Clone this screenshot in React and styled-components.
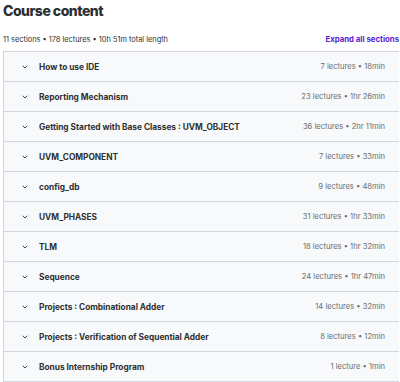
import styled, { createGlobalStyle } from 'styled-components';

const GlobalStyle = createGlobalStyle`
  html, body {
    margin: 0;
    padding: 0;
    background: #ffffff;
    overflow: hidden;
  }
  body {
    font-family: 'Inter', 'Noto Sans', sans-serif;
    color: #2d2f31;
  }
`;

const Page = styled.div`
  width: 396px;
  padding: 0 0 0 3px;
`;

const Title = styled.h2`
  margin: 0;
  padding-top: 1px;
  font-size: 14px;
  font-weight: 800;
  line-height: 20px;
  letter-spacing: -0.5px;
  color: #2d2f31;
`;

const Summary = styled.div`
  display: flex;
  justify-content: space-between;
  align-items: center;
  height: 16px;
  margin-top: 10px;
  margin-bottom: 4px;
  font-size: 7.4px;
  color: #2d2f31;
`;

const ExpandAll = styled.button`
  border: 0;
  background: none;
  padding: 0;
  font-family: inherit;
  font-size: 7.8px;
  font-weight: 700;
  color: #5624d0;
  cursor: pointer;
`;

const Sections = styled.div`
  border: 1px solid #d1d7dc;
  border-right: none;
`;

const SectionRow = styled.div`
  display: flex;
  align-items: center;
  height: 29px;
  padding: 0 14px 0 17px;
  background: #f7f9fa;

  &:not(:last-child) {
    border-bottom: 1px solid #d1d7dc;
  }
`;

const Chevron = styled.svg`
  width: 8px;
  height: 8px;
  flex-shrink: 0;
  margin-right: 10px;
`;

const SectionTitle = styled.div`
  flex: 1;
  font-size: 8.3px;
  font-weight: 700;
  color: #2d2f31;
`;

const SectionMeta = styled.div`
  font-size: 7.6px;
  color: #6a6f73;
`;

const sections = [
  ['How to use IDE', '7 lectures • 18min'],
  ['Reporting Mechanism', '23 lectures • 1hr 26min'],
  ['Getting Started with Base Classes : UVM_OBJECT', '36 lectures • 2hr 11min'],
  ['UVM_COMPONENT', '7 lectures • 33min'],
  ['config_db', '9 lectures • 48min'],
  ['UVM_PHASES', '31 lectures • 1hr 33min'],
  ['TLM', '18 lectures • 1hr 32min'],
  ['Sequence', '24 lectures • 1hr 47min'],
  ['Projects : Combinational Adder', '14 lectures • 32min'],
  ['Projects : Verification of Sequential Adder', '8 lectures • 12min'],
  ['Bonus Internship Program', '1 lecture • 1min'],
];

function Section({ title, meta }) {
  return (
    <SectionRow>
      <Chevron viewBox="0 0 8 8">
        <path d="M2 3 L4 5 L6 3" fill="none" stroke="#2d2f31" strokeWidth="0.9" strokeLinecap="round" />
      </Chevron>
      <SectionTitle>{title}</SectionTitle>
      <SectionMeta>{meta}</SectionMeta>
    </SectionRow>
  );
}

export default function App() {
  return (
    <Page>
      <GlobalStyle />
      <Title>Course content</Title>
      <Summary>
        <span>11 sections • 178 lectures • 10h 51m total length</span>
        <ExpandAll>Expand all sections</ExpandAll>
      </Summary>
      <Sections>
        {sections.map(([title, meta]) => (
          <Section key={title} title={title} meta={meta} />
        ))}
      </Sections>
    </Page>
  );
}
